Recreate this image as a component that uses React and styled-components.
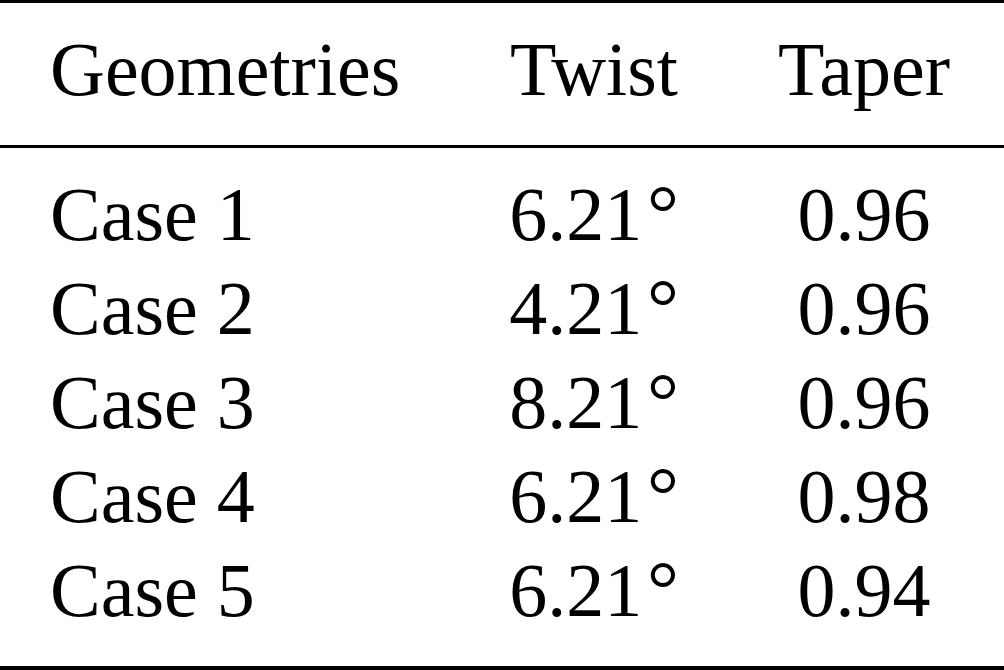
import React from 'react';
import styled, { createGlobalStyle } from 'styled-components';

const GlobalStyle = createGlobalStyle`
    html, body {
        margin: 0;
        padding: 0;
        background: #fff;
    }
`;

const Table = styled.table`
    width: 1004px;
    table-layout: fixed;
    border-collapse: separate;
    border-spacing: 0;
    border-top: 3px solid #000;
    border-bottom: 4px solid #000;
    font-family: 'Liberation Serif', 'Times New Roman', serif;
    font-size: 76px;
    line-height: 94px;
    color: #000;

    tbody tr:first-child td {
        padding-top: 19px;
    }

    tbody tr:last-child td {
        padding-bottom: 29px;
    }
`;

const HeadCell = styled.th`
    box-sizing: border-box;
    width: ${p => p.$w}px;
    font-weight: normal;
    white-space: nowrap;
    padding: 19px 0 29px;
    border-bottom: 3px solid #000;
    text-align: ${p => (p.$align === 'left' ? 'left' : 'center')};

    &:first-child {
        padding-left: 50px;
    }
`;

const Cell = styled.td`
    box-sizing: border-box;
    white-space: nowrap;
    padding: 0;
    text-align: ${p => (p.$align === 'left' ? 'left' : 'center')};

    &:first-child {
        padding-left: 50px;
    }
`;

const Degree = styled.span`
    font-size: 1.05em;
    line-height: 0;
    margin-left: 0.06em;
`;

const rows = [
    { name: 'Case 1', twist: '6.21', taper: '0.96' },
    { name: 'Case 2', twist: '4.21', taper: '0.96' },
    { name: 'Case 3', twist: '8.21', taper: '0.96' },
    { name: 'Case 4', twist: '6.21', taper: '0.98' },
    { name: 'Case 5', twist: '6.21', taper: '0.94' },
];

const App = () => {
    return (
        <>
            <GlobalStyle />
            <Table>
                <thead>
                    <tr>
                        <HeadCell $align="left" $w={464}>Geometries</HeadCell>
                        <HeadCell $w={260}>Twist</HeadCell>
                        <HeadCell $w={280}>Taper</HeadCell>
                    </tr>
                </thead>
                <tbody>
                    {rows.map(r => (
                        <tr key={r.name}>
                            <Cell $align="left">{r.name}</Cell>
                            <Cell>
                                {r.twist}
                                <Degree>°</Degree>
                            </Cell>
                            <Cell>{r.taper}</Cell>
                        </tr>
                    ))}
                </tbody>
            </Table>
        </>
    );
};

export default App;
